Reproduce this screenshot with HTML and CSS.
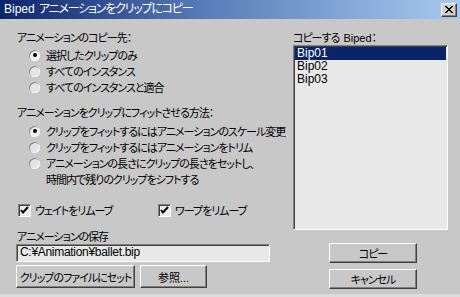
FILE: index.html
```html
<!DOCTYPE html>
<html>
<head>
  <meta charset="utf-8">
  <link rel="stylesheet" href="styles.css">
</head>
<body>
  <div class="dialog">
    <div class="titlebar">
      <span class="title"><span class="latin">Biped</span> アニメーションをクリップにコピー</span>
      <span class="close-btn">
        <svg width="8" height="7" viewBox="0 0 8 7"><path d="M0 0L7 7M1 0L8 7M7 0L0 7M8 0L1 7" stroke="#000" stroke-width="1"/></svg>
      </span>
    </div>

    <div class="content">
      <div class="left-col">
        <div class="group-label">アニメーションのコピー先：</div>
        <div class="radio-group">
          <div class="radio checked"><span class="radio-mark"></span>選択したクリップのみ</div>
          <div class="radio"><span class="radio-mark"></span>すべてのインスタンス</div>
          <div class="radio"><span class="radio-mark"></span>すべてのインスタンスと適合</div>
        </div>

        <div class="group-label second">アニメーションをクリップにフィットさせる方法：</div>
        <div class="radio-group tight">
          <div class="radio checked"><span class="radio-mark"></span>クリップをフィットするにはアニメーションのスケール変更</div>
          <div class="radio"><span class="radio-mark"></span>クリップをフィットするにはアニメーションをトリム</div>
          <div class="radio"><span class="radio-mark"></span>アニメーションの長さにクリップの長さをセットし、</div>
          <div class="radio-cont">時間内で残りのクリップをシフトする</div>
        </div>

        <div class="checks">
          <div class="check first">
            <span class="check-box"><svg width="9" height="9" viewBox="0 0 9 9"><path d="M1 4L3 6.5L8 1" fill="none" stroke="#000" stroke-width="2"/></svg></span>
            ウェイトをリムーブ
          </div>
          <div class="check">
            <span class="check-box"><svg width="9" height="9" viewBox="0 0 9 9"><path d="M1 4L3 6.5L8 1" fill="none" stroke="#000" stroke-width="2"/></svg></span>
            ワープをリムーブ
          </div>
        </div>

        <div class="save-label">アニメーションの保存</div>
        <div class="path-input">C:¥Animation¥ballet.bip</div>
        <div class="btn-row">
          <div class="btn set-btn">クリップのファイルにセット</div>
          <div class="btn browse-btn">参照...</div>
        </div>
      </div>

      <div class="right-col">
        <div class="list-label">コピーする <span class="latin">Biped</span>：</div>
        <div class="listbox">
          <div class="list-item selected">Bip01</div>
          <div class="list-item">Bip02</div>
          <div class="list-item">Bip03</div>
        </div>
        <div class="btn action-btn">コピー</div>
        <div class="btn action-btn cancel">キャンセル</div>
      </div>
    </div>
  </div>
</body>
</html>
```

FILE: styles.css
```css
body {
  margin: 0;
  background-color: #c8c8c8;
  font-family: "Liberation Sans", "Noto Sans CJK JP", sans-serif;
  font-size: 11px;
  color: #000;
  font-feature-settings: "palt";
}

.dialog {
  width: 460px;
  height: 297px;
  background-color: #c8c8c8;
  box-sizing: border-box;
  border-bottom: 3px solid #dcdcdc;
  overflow: hidden;
}

.latin {
  letter-spacing: 0;
}

/* title bar */
.titlebar {
  height: 19px;
  display: flex;
  align-items: center;
  justify-content: space-between;
  padding: 0 3px 0 4px;
  background: linear-gradient(to right, #0a246a, #5a7cb8 45%, #a6caf0);
  color: #fff;
}

.title {
  font-size: 12px;
  line-height: 19px;
  letter-spacing: -1.2px;
  word-spacing: 2px;
}

.close-btn {
  width: 16px;
  height: 14px;
  box-sizing: border-box;
  display: flex;
  align-items: center;
  justify-content: center;
  background-color: #d4d0c8;
  border-top: 1px solid #fff;
  border-left: 1px solid #fff;
  border-right: 1px solid #404040;
  border-bottom: 1px solid #404040;
  box-shadow: inset -1px -1px 0 #808080;
}

.content {
  display: flex;
  padding-top: 11px;
}

/* left column */
.left-col {
  width: 293px;
  padding-left: 17px;
  box-sizing: border-box;
}

.group-label {
  height: 16px;
  line-height: 16px;
  white-space: nowrap;
  letter-spacing: -1px;
}

.group-label.second {
  margin-top: 10px;
}

.radio-group {
  margin-top: 1px;
}

.radio-group.tight {
  margin-top: 2px;
}

.radio,
.radio-cont {
  display: flex;
  align-items: center;
  height: 16px;
  padding-left: 12px;
  white-space: nowrap;
  letter-spacing: -1px;
}

.radio-cont {
  padding-left: 29px;
}

.radio-mark {
  width: 11px;
  height: 11px;
  margin-right: 6px;
  border-radius: 50%;
  display: flex;
  align-items: center;
  justify-content: center;
  background-color: #e4e4e4;
  box-shadow: inset 1px 1px 0 #8c8c8c, inset -1px -1px 0 #f4f4f4;
  flex-shrink: 0;
}

.radio.checked .radio-mark {
  background-color: #f0f0f0;
}

.radio.checked .radio-mark::after {
  content: "";
  width: 4px;
  height: 4px;
  border-radius: 50%;
  background-color: #000;
}

.checks {
  display: flex;
  height: 16px;
  margin-top: 15px;
}

.check {
  display: flex;
  align-items: center;
  white-space: nowrap;
  letter-spacing: -1px;
}

.check.first {
  width: 140px;
}

.check-box {
  width: 13px;
  height: 13px;
  margin: 0 4px 0 1px;
  box-sizing: border-box;
  display: flex;
  align-items: center;
  justify-content: center;
  background-color: #ececec;
  border-top: 1px solid #808080;
  border-left: 1px solid #808080;
  border-right: 1px solid #fff;
  border-bottom: 1px solid #fff;
  box-shadow: inset 1px 1px 0 #404040;
}

.save-label {
  margin-top: 12px;
  height: 14px;
  line-height: 14px;
  letter-spacing: -1px;
}

.path-input {
  width: 254px;
  height: 18px;
  margin-left: -1px;
  box-sizing: border-box;
  padding-left: 3px;
  line-height: 15px;
  font-size: 12px;
  letter-spacing: -0.3px;
  background-color: #e8e8e8;
  border-top: 1px solid #808080;
  border-left: 1px solid #808080;
  border-right: 1px solid #fff;
  border-bottom: 1px solid #fff;
  box-shadow: inset 1px 1px 0 #404040;
}

.btn-row {
  display: flex;
  gap: 5px;
  margin-top: 3px;
  margin-left: -1px;
}

.btn {
  box-sizing: border-box;
  display: flex;
  align-items: center;
  justify-content: center;
  background-color: #c8c8c8;
  border-top: 1px solid #fff;
  border-left: 1px solid #fff;
  border-right: 1px solid #404040;
  border-bottom: 1px solid #404040;
  box-shadow: inset -1px -1px 0 #808080;
  white-space: nowrap;
  letter-spacing: -1px;
}

.set-btn {
  width: 119px;
  height: 23px;
}

.browse-btn {
  width: 67px;
  height: 23px;
  letter-spacing: 0;
}

/* right column */
.right-col {
  width: 155px;
}

.list-label {
  height: 15px;
  line-height: 16px;
  white-space: nowrap;
  letter-spacing: -1px;
  word-spacing: 2px;
}

.listbox {
  height: 185px;
  box-sizing: border-box;
  padding: 1px;
  background-color: #e8e8e8;
  border-top: 1px solid #808080;
  border-left: 1px solid #808080;
  border-right: 1px solid #fff;
  border-bottom: 1px solid #fff;
  box-shadow: inset 1px 1px 0 #404040;
}

.list-item {
  height: 13px;
  line-height: 13px;
  padding-left: 2px;
  font-size: 12px;
}

.list-item.selected {
  background-color: #0a246a;
  color: #fff;
}

.action-btn {
  width: 88px;
  height: 20px;
  margin: 13px 0 0 36px;
}

.action-btn.cancel {
  margin-top: 6px;
}
```
